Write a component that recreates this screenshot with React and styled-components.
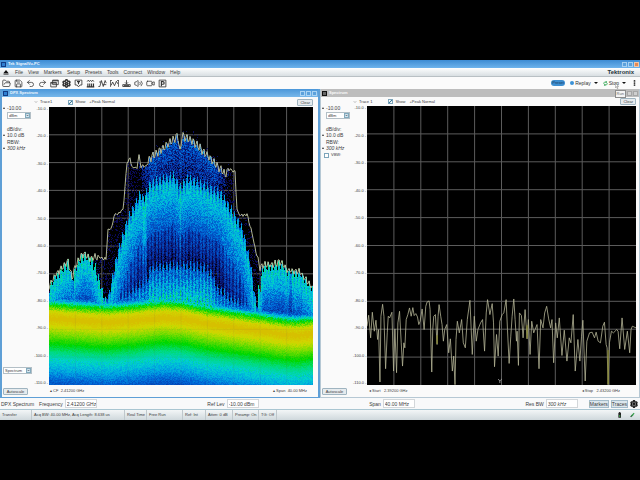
import { useMemo } from "react";
import styled, { createGlobalStyle } from "styled-components";
import {
  FolderOpen,
  Save,
  Undo2,
  Redo2,
  Settings,
  Volume2,
  Video,
  ChevronDown,
  EllipsisVertical,
} from "lucide-react";

const MENU = ["File", "View", "Markers", "Setup", "Presets", "Tools", "Connect", "Window", "Help"];
const LEVELS = ["-10.0", "-20.0", "-30.0", "-40.0", "-50.0", "-60.0", "-70.0", "-80.0", "-90.0", "-100.0", "-110.0"];

//density colour scale, from no hits to many hits
const SCALE = [
  [0, 0, 0, 0],
  [0.1, 10, 10, 85],
  [0.25, 5, 50, 165],
  [0.4, 0, 105, 215],
  [0.5, 0, 165, 225],
  [0.6, 0, 210, 205],
  [0.68, 0, 218, 120],
  [0.76, 0, 215, 0],
  [0.86, 130, 220, 0],
  [0.93, 208, 216, 0],
  [1, 216, 182, 0],
];

//all of the curves below are [x, y] in a 264 x 278 plot
const PEAK = [
  [0, 180], [3, 173], [6, 168], [13, 161], [19, 154], [23, 171], [26, 160], [31, 151],
  [34, 147], [41, 151], [46, 150], [53, 151], [57, 152], [59, 123], [63, 120], [65, 108],
  [69, 107], [74, 103], [78, 56], [81, 51], [83, 61], [88, 60], [90, 48], [92, 59],
  [97, 59], [100, 52], [113, 42], [121, 35], [129, 29], [131, 46], [133, 29], [144, 34],
  [154, 44], [164, 54], [176, 67], [179, 62], [186, 65], [188, 103], [191, 108],
  [198, 107], [203, 126], [207, 146], [211, 160], [216, 158], [223, 158], [231, 155],
  [239, 163], [251, 165], [263, 180],
];
const LOBE = [
  [57, 205], [59, 190], [68, 146], [78, 113], [91, 86], [94, 92], [101, 76], [124, 68], [131, 80],
  [138, 71], [151, 76], [171, 86], [181, 101], [193, 122], [201, 156], [206, 193], [208, 205],
];
const INNER = [
  [57, 200], [80, 184], [98, 172], [101, 160], [131, 157], [155, 160], [163, 166], [167, 180], [178, 188], [207, 205],
];
const FLOOR = [
  [0, 211], [58, 215], [85, 213], [114, 210], [132, 211], [158, 216], [208, 223], [235, 227], [248, 228], [263, 226],
];
const FLOOR_PROFILE = [
  [-60, 0], [-24, 0.2], [-20, 0.42], [-17, 0.6], [-14, 0.74], [-11, 0.82], [-7, 0.93], [0, 0.99],
  [7, 0.94], [15, 0.86], [25, 0.76], [33, 0.68], [43, 0.59], [52, 0.5], [60, 0.4], [70, 0.3],
];
const HAZE = [[88, 0.06], [102, 0.36], [165, 0.36], [180, 0.08]];

//single sweep of the right plot, [x, y] in 810 x 840
const SWEEP = [
  [0, 663], [5, 630], [11, 698], [16, 621], [22, 678], [27, 645], [32, 703], [35, 673], [39, 831],
  [42, 633], [47, 597], [51, 633], [56, 791], [61, 683], [64, 633], [68, 638], [75, 621], [80, 798],
  [84, 671], [89, 803], [93, 653], [98, 618], [103, 713], [107, 783], [111, 713], [114, 728],
  [118, 643], [123, 628], [128, 608], [133, 633], [138, 607], [142, 631], [147, 625], [152, 635],
  [156, 658], [160, 648], [166, 611], [172, 673], [177, 603], [181, 590], [187, 587], [190, 613],
  [195, 801], [198, 673], [201, 633], [206, 628], [211, 718], [214, 633], [217, 598], [222, 633],
  [226, 658], [230, 708], [234, 673], [240, 658], [246, 743], [251, 701], [257, 798], [261, 753],
  [265, 839], [268, 703], [272, 648], [278, 683], [285, 643], [290, 713], [296, 728], [302, 643],
  [310, 585], [317, 748], [323, 633], [329, 708], [334, 673], [342, 653], [348, 643], [354, 738],
  [359, 623], [363, 583], [370, 628], [377, 595], [381, 653], [384, 785], [390, 688], [395, 753],
  [400, 648], [407, 628], [412, 623], [419, 583], [423, 673], [428, 775], [433, 693], [437, 633],
  [442, 581], [446, 643], [450, 708], [452, 678], [456, 781], [459, 623], [465, 631], [470, 698],
  [476, 613], [482, 701], [486, 643], [491, 748], [496, 648], [502, 683], [512, 658], [518, 791],
  [523, 643], [530, 668], [535, 623], [541, 603], [547, 641], [553, 668], [557, 643], [562, 773],
  [568, 653], [573, 698], [579, 638], [587, 751], [594, 675], [602, 768], [609, 698], [614, 713],
  [621, 628], [627, 798], [635, 703], [641, 768], [646, 693], [650, 645], [657, 828], [662, 708],
  [670, 683], [678, 681], [685, 698], [690, 681], [696, 708], [703, 713], [710, 663], [715, 651],
  [720, 718], [723, 728], [726, 839], [730, 713], [736, 678], [742, 683], [752, 673], [756, 678],
  [761, 731], [768, 638], [776, 733], [784, 678], [791, 743], [795, 673], [799, 663], [810, 668],
];

const lerp = (points, x) => {
  if (x <= points[0][0]) return points[0][1];
  for (let i = 1; i < points.length; i++) {
    const [x1, y1] = points[i];
    const [x0, y0] = points[i - 1];
    if (x <= x1) return y0 + ((y1 - y0) * (x - x0)) / (x1 - x0);
  }
  return points[points.length - 1][1];
};

const noise = (x, y) => {
  const n = Math.sin(x * 127.1 + y * 311.7) * 43758.5453;
  return n - Math.floor(n);
};

const colorOf = (value) => {
  const channel = (n) => Math.round(lerp(SCALE.map((s) => [s[0], s[n]]), value));
  return `rgb(${channel(1)}, ${channel(2)}, ${channel(3)})`;
};

const ripple = (x) => Math.cos((x * Math.PI * 2) / 3.4);

const peakAt = (x) => {
  let swing = 1;
  if (x > 98 && x < 178) swing = 4;
  if (x < 50 || x > 208) swing = 3;
  return lerp(PEAK, x) + ripple(x) * swing + (noise(x, 7) - 0.5) * 2;
};

const densityAt = (x, y) => {
  const grain = noise(x, y);
  const comb = ripple(x);
  const d = y - lerp(FLOOR, x);
  const base = lerp(FLOOR_PROFILE, d + (grain - 0.5) * 3);
  let value = d > -24 ? base : 0;
  if (d > 40) value += (grain - 0.5) * 0.12;
  if (d > -14) return value;

  const peak = peakAt(x);
  if (y < peak) return noise(x + 3, y) > 0.94 && peak - y < 8 && x > 98 && x < 180 ? 0.12 : 0;

  if (x < 57 || x > 208) {
    //side lobes, they close in towards the nulls
    const left = x < 57;
    const edge = left ? Math.max(0, x - 42) * 3 : Math.max(0, 214 - x) * 6;
    const depth = y - peak - edge - comb * 3;
    if (depth < 0) return Math.max(value, grain > 0.75 ? 0.12 : 0);
    const split = Math.abs(x - (left ? 23 : 241)) < 2 ? 0.1 : 0;
    const glow = 0.57 - Math.max(0, depth - 14) * 0.008;
    return Math.max(value, glow - split - comb * 0.05 + (grain - 0.5) * 0.16);
  }

  const lobe = y - lerp(LOBE, x) - comb * 5;
  const inner = y - lerp(INNER, x) - comb * 5;
  if (inner > 0) {
    value = Math.max(value, 0.34 + inner * 0.007 - comb * 0.04 + (grain - 0.5) * 0.2);
  }
  if (lobe > 0) {
    const steep = x < 98 || x > 172;
    let glow = lobe < 12 ? 0.42 + lobe * 0.012 : 0.56 - (lobe - 12) * (steep ? 0.0045 : 0.0055);
    if (Math.abs(x - 131) < 1 || Math.abs(x - 95) < 1.5) glow += 0.06;
    if (lobe > 46) glow -= comb > 0.1 ? 0.11 : 0;
    glow = Math.max(glow, 0.1);
    return Math.max(value, glow - comb * 0.03 + (grain - 0.5) * 0.16);
  }
  if (x > 88 && x < 180) {
    return Math.max(value, lerp(HAZE, x) - (y - peak) * 0.005 - comb * 0.04 + (grain - 0.6) * 0.3);
  }
  return Math.max(value, grain > 0.72 ? 0.1 : 0.02);
};

//one path per colour, runs of equal cells are joined
const buildDensity = () => {
  const steps = 50;
  const paths = {};
  for (let x = 0; x < 264; x++) {
    let start = 0;
    let last = 0;
    for (let y = 20; y <= 278; y++) {
      const value = y < 278 ? Math.min(1, Math.max(0, densityAt(x, y))) : -1;
      const step = Math.round(value * steps);
      if (step !== last) {
        if (last > 1) {
          paths[last] = (paths[last] || "") + `M${x} ${start}h1v${y - start}h-1z`;
        }
        start = y;
        last = step;
      }
    }
  }
  return Object.entries(paths).map(([step, d]) => ({ d, fill: colorOf(step / steps) }));
};

const Grid = ({ width, height, opacity = 1 }) => {
  let d = "";
  for (let i = 1; i < 10; i++) {
    d += `M${(width * i) / 10} 0V${height}M0 ${(height * i) / 10}H${width}`;
  }
  return <path d={d} fill="none" stroke="#5c5c5c" vectorEffect="non-scaling-stroke" opacity={opacity} />;
};

const DensityPlot = () => {
  const cells = useMemo(buildDensity, []);
  const line = useMemo(() => {
    let d = "";
    for (let x = 0; x < 264; x++) d += `${x ? "L" : "M"}${x} ${peakAt(x).toFixed(1)}`;
    return d;
  }, []);
  return (
    <PlotSvg viewBox="0 0 264 278" preserveAspectRatio="none" role="img" aria-label="DPX density">
      <rect width="264" height="278" fill="#000" />
      <Grid width={264} height={278} />
      <g shapeRendering="crispEdges">
        {cells.map((cell) => (
          <path key={cell.fill} d={cell.d} fill={cell.fill} />
        ))}
      </g>
      <Grid width={264} height={278} opacity={0.08} />
      <path d={line} fill="none" stroke="#c3c7a4" strokeWidth="0.9" />
    </PlotSvg>
  );
};

const SweepPlot = () => (
  <PlotSvg viewBox="0 0 810 840" preserveAspectRatio="none" role="img" aria-label="Spectrum trace">
    <rect width="810" height="840" fill="#000" />
    <Grid width={810} height={840} />
    <polyline points={SWEEP.join(" ")} fill="none" stroke="#b4b496" strokeWidth="2.4" strokeLinejoin="round" />
    <path d="M726 735V838M211 690V716M482 660V700" stroke="#85851c" strokeWidth="3" />
    <path d="M395 822l5 6 6-6M400 828v6" fill="none" stroke="#ccc" strokeWidth="2" />
  </PlotSvg>
);

const Glyph = ({ children }) => (
  <svg viewBox="0 0 24 24" fill="none" stroke="currentColor" strokeWidth="2.2">
    {children}
  </svg>
);

const TOOLS = [
  ["Open", <FolderOpen />],
  ["Save", <Save />],
  ["Undo", <Undo2 />],
  ["Redo", <Redo2 />],
  ["Displays", <Glyph><path d="M7 3h15v12H7zM2 9h15v12H2z" fill="#fff" /><path d="M7 4.5h15M2 10.5h15" strokeWidth="3" /></Glyph>],
  ["Settings", <Settings strokeWidth={4} />],
  ["Trigger", <Glyph><path d="M3 3h18v13h-5l-4 5-4-5H3z" /><path d="M8 7h8M12 7v7" strokeWidth="3" /></Glyph>],
  ["Acquire", <Glyph><path d="M2 21h20M5 21v-9M10 21v-9M15 21v-9M20 21v-9" strokeWidth="3" /><path d="M3 7l3-4 3 4 3-4 3 4 3-4 3 4" /></Glyph>],
  ["Analysis", <Glyph><path d="M1 20h4L9 4l5 16L19 4l3 7" /><path d="M3 8h6M14 15h8" /></Glyph>],
  ["Trace", <Glyph><path d="M1 3v18M23 3v18M1 4h4M19 4h4" /><path d="M3 17l4-9 5 10 5-12 4 7" /></Glyph>],
  ["Amplitude", <Glyph><path d="M2 15h20v5H2zM12 3v10M8 9l4 4 4-4" /><path d="M5 18h14" strokeWidth="3" /></Glyph>],
  ["Audio", <Volume2 />],
  ["Record", <Video />],
  ["Presets", <Glyph><path d="M3 3h18v18H3z" /><path d="M9 19V7h4a3 3 0 010 7H9" strokeWidth="3" /></Glyph>],
];

const Drop = ({ label, value, width }) => (
  <SelectBox $width={width}>
    <select aria-label={label} defaultValue={value}>
      <option>{value}</option>
    </select>
    <ChevronDown />
  </SelectBox>
);

const Reading = ({ label, children, italic }) => (
  <StyledReading $italic={italic}>
    {label && <span>{label}</span>}
    <em>{children}</em>
  </StyledReading>
);

const Panel = ({ title, trace, active, start, stop, view, vbw, children }) => (
  <StyledPanel $active={active}>
    <PanelTitle $active={active}>
      <PanelIcon $active={active} />
      <h2>{title}</h2>
      <WindowButtons>
        <button aria-label={`Minimize ${title}`} />
        <button aria-label={`Maximize ${title}`} />
        {active && <button aria-label={`Close ${title}`} />}
      </WindowButtons>
    </PanelTitle>
    <PanelBody>
      <Side>
        <Reading>-10.00</Reading>
        <Drop label={`${title} units`} value="dBm" width={24} />
        <Reading label="dB/div:">10.0 dB</Reading>
        <Reading label="RBW:" italic>300 kHz</Reading>
        {vbw && (
          <Check>
            <input type="checkbox" />
            VBW:
          </Check>
        )}
        <SideFoot>
          {view && <Drop label="View" value="Spectrum" width={29} />}
          <SmallButton>Autoscale</SmallButton>
        </SideFoot>
      </Side>
      <ChartArea $active={active}>
        <TraceBar $active={active}>
          <TraceName>
            <ChevronDown />
            {trace}
          </TraceName>
          <Check>
            <input type="checkbox" defaultChecked />
            Show
          </Check>
          <span>+Peak Normal</span>
          <SmallButton>Clear</SmallButton>
        </TraceBar>
        <ChartRow>
          <Ticks $active={active}>
            {LEVELS.map((level) => (
              <li key={level}>{level}</li>
            ))}
          </Ticks>
          {children}
        </ChartRow>
        <ChartFoot $active={active}>
          <span>{start}</span>
          <span>{stop}</span>
        </ChartFoot>
      </ChartArea>
    </PanelBody>
  </StyledPanel>
);

const Field = ({ label, value, italic }) => (
  <StyledField $italic={italic}>
    {label}
    <input defaultValue={value} />
  </StyledField>
);

const App = () => {
  return (
    <>
      <GlobalStyle />
      <Stage>
        <Window>
          <TitleBar>
            <PanelIcon $active />
            <h1>Tek SignalVu-PC</h1>
            <WindowButtons>
              <button aria-label="Minimize" />
              <button aria-label="Restore" />
              <CloseButton aria-label="Close" />
            </WindowButtons>
          </TitleBar>
          <MenuBar>
            <svg viewBox="0 0 12 10">
              <path d="M6 0l5 6H1zM1 7h10v2H1z" fill="#111" />
            </svg>
            {MENU.map((item) => (
              <button key={item}>{item}</button>
            ))}
            <Brand>Tektronix</Brand>
          </MenuBar>
          <ToolBar>
            <Tools>
              {TOOLS.map(([name, icon]) => (
                <button key={name} aria-label={name}>
                  {icon}
                </button>
              ))}
            </Tools>
            <RunControls>
              <PresetButton>Preset</PresetButton>
              <RunButton>
                <Dot />
                Replay
                <Caret />
              </RunButton>
              <RunButton>
                <svg viewBox="0 0 24 24" fill="none" stroke="#31a653" strokeWidth="4">
                  <path d="M4 14a8 8 0 0113-8M20 10a8 8 0 01-13 8M17 1v6h-6M7 23v-6h6" />
                </svg>
                Stop
                <Caret />
                <Pointer viewBox="0 0 12 18">
                  <path d="M1 1v13l3-3 3 6 2-1-3-6h5z" fill="#fff" stroke="#333" />
                </Pointer>
                <Tip role="tooltip">Run</Tip>
              </RunButton>
              <IconButton aria-label="More">
                <EllipsisVertical strokeWidth={4} />
              </IconButton>
            </RunControls>
          </ToolBar>
          <Panels>
            <Panel
              active
              view
              title="DPX Spectrum"
              trace="Trace1"
              start="▴ CF  2.41200 GHz"
              stop="▴ Span  40.00 MHz"
            >
              <DensityPlot />
            </Panel>
            <Panel vbw title="Spectrum" trace="Trace 1" start="◂ Start   2.39200 GHz" stop="◂ Stop   2.43200 GHz">
              <SweepPlot />
            </Panel>
          </Panels>
          <ControlBar>
            <Group $gap={5}>
              <span>DPX Spectrum</span>
              <Field label="Frequency" value="2.41200 GHz" />
            </Group>
            <Field label="Ref Lev" value="-10.00 dBm" />
            <Field label="Span" value="40.00 MHz" />
            <Group $gap={11}>
              <Field label="Res BW" value="300 kHz" italic />
              <Group $gap={2}>
                <BarButton>Markers</BarButton>
                <BarButton>Traces</BarButton>
                <IconButton aria-label="Settings">
                  <Settings strokeWidth={4} />
                </IconButton>
              </Group>
            </Group>
          </ControlBar>
          <StatusBar>
            <StatusCell $width={32}>Transfer</StatusCell>
            <StatusCell $width={93}>Acq BW: 40.00 MHz, Acq Length: 8.638 us</StatusCell>
            <StatusCell $width={22}>Real Time</StatusCell>
            <StatusCell $width={36}>Free Run</StatusCell>
            <StatusCell $width={23}>Ref: Int</StatusCell>
            <StatusCell $width={27}>Atten: 0 dB</StatusCell>
            <StatusCell $width={26}>Preamp: On</StatusCell>
            <StatusCell $width={18}>TG: Off</StatusCell>
            <StatusIcons>
              <svg viewBox="0 0 12 16">
                <path d="M3 2h2V0h3v2h2v13H3z" fill="#222" />
                <path d="M5 8h3v5H5z" fill="#3a9a4a" />
              </svg>
              <svg viewBox="0 0 16 16" fill="none" strokeWidth="4">
                <path d="M2 14l7-7" stroke="#245c34" />
                <path d="M6 11l7-9" stroke="#39a04e" />
              </svg>
            </StatusIcons>
          </StatusBar>
        </Window>
      </Stage>
    </>
  );
};

const GlobalStyle = createGlobalStyle`
  * {
    box-sizing: border-box;
    margin: 0;
    padding: 0;
  }
  body {
    background: #000;
    color: #3c3c3c;
    font-family: "Liberation Sans", Arial, sans-serif;
    font-size: 4px;
    line-height: 6px;
  }
  button, input, select {
    border: none;
    background: none;
    font: inherit;
    color: inherit;
    white-space: nowrap;
  }
  h1, h2 {
    font-size: 4px;
    line-height: 8px;
    font-weight: bold;
  }
  svg {
    display: block;
    flex-shrink: 0;
  }
`;

const Stage = styled.div`
  min-height: 100vh;
  display: flex;
  align-items: center;
`;

const Window = styled.main`
  width: 100%;
  aspect-ratio: 16 / 9;
  display: flex;
  flex-direction: column;
  background: #fafafa;
`;

const TitleBar = styled.header`
  height: 8px;
  flex-shrink: 0;
  display: flex;
  align-items: center;
  gap: 2px;
  padding: 0 1px;
  background: linear-gradient(#3c8bd3, #6db3ec);
  color: #f0f8ff;
`;

const WindowButtons = styled.div`
  margin-left: auto;
  display: flex;
  gap: 1px;
  button {
    width: 5px;
    height: 5px;
    border: 1px solid #a5d0f1;
    background: #5ba1dc;
  }
`;

const CloseButton = styled.button`
  && {
    background: #e58a55;
    border-color: #f3c7a8;
  }
`;

const MenuBar = styled.nav`
  height: 9px;
  flex-shrink: 0;
  display: flex;
  align-items: center;
  gap: 5px;
  padding: 0 6px 0 3px;
  background: linear-gradient(#fdfefe, #d9dfe2);
  border-bottom: 1px solid #b9c0c4;
  font-size: 5px;
  svg {
    width: 6px;
    height: 5px;
    margin-right: 1px;
  }
`;

const Brand = styled.strong`
  margin-left: auto;
  font-size: 6px;
  color: #26343c;
`;

const ToolBar = styled.div`
  height: 12px;
  flex-shrink: 0;
  display: flex;
  align-items: center;
  justify-content: space-between;
  padding: 0 2px;
  background: #fbfbfb;
  color: #333;
`;

const Tools = styled.div`
  display: flex;
  gap: 3px;
  svg {
    width: 9px;
    height: 9px;
  }
`;

const RunControls = styled.div`
  display: flex;
  align-items: center;
  gap: 5px;
  font-size: 5px;
`;

const PresetButton = styled.button`
  width: 14px;
  height: 6px;
  border-radius: 3px;
  background: #3d8ed0;
  color: #17375a;
  font-size: 4px;
  line-height: 6px;
`;

const RunButton = styled.button`
  position: relative;
  display: flex;
  align-items: center;
  gap: 1px;
  svg {
    width: 5px;
    height: 5px;
  }
`;

const Dot = styled.i`
  width: 4px;
  height: 4px;
  border-radius: 50%;
  background: #3c92d6;
`;

const Caret = styled.i`
  margin-left: 2px;
  border: 2px solid transparent;
  border-top-color: #111;
  border-bottom: none;
`;

const Pointer = styled.svg`
  && {
    position: absolute;
    left: 12px;
    top: 3px;
    width: 4px;
    height: 6px;
    z-index: 2;
  }
`;

const Tip = styled.span`
  position: absolute;
  left: 12px;
  top: 10px;
  z-index: 2;
  width: 11px;
  height: 8px;
  border: 1px solid #8c8c8c;
  background: #f4f4f4;
  color: #666;
  font-size: 4px;
  line-height: 6px;
  text-align: center;
`;

const IconButton = styled.button`
  svg {
    width: 8px;
    height: 8px;
    color: #111;
  }
  ${RunControls} & svg {
    width: 7px;
  }
`;

const Panels = styled.div`
  flex: 1;
  min-height: 0;
  display: grid;
  grid-template-columns: 1fr 1fr;
`;

const StyledPanel = styled.section`
  display: flex;
  flex-direction: column;
  min-width: 0;
  border: solid ${({ $active }) => ($active ? "#5e9fd6" : "#b6c8d4")};
  border-width: ${({ $active }) => ($active ? "0 2px 1px" : "0 1px 1px")};
  background: #fafafa;
`;

const PanelTitle = styled.div`
  height: 8px;
  flex-shrink: 0;
  display: flex;
  align-items: center;
  gap: 2px;
  padding: 0 1px;
  background: ${({ $active }) => ($active ? "linear-gradient(#4b97d9, #77b7ea)" : "#bdbdbd")};
  color: ${({ $active }) => ($active ? "#f0f8ff" : "#fafafa")};
  ${WindowButtons} button {
    border-color: ${({ $active }) => ($active ? "#a9d3f3" : "#a6a6a6")};
    background: ${({ $active }) => ($active ? "#5ba1dc" : "#cfcfcf")};
  }
`;

const PanelIcon = styled.i`
  width: 5px;
  height: 5px;
  border: 1px solid ${({ $active }) => ($active ? "#123c84" : "#111")};
  background: ${({ $active }) => ($active ? "#2f7fd0" : "#666")};
`;

const PanelBody = styled.div`
  flex: 1;
  min-height: 0;
  display: flex;
`;

const Side = styled.div`
  width: 32px;
  flex-shrink: 0;
  display: flex;
  flex-direction: column;
  align-items: flex-start;
  padding: 8px 0 2px 1px;
  > label {
    margin-left: 2px;
  }
`;

const StyledReading = styled.div`
  display: flex;
  flex-direction: column;
  margin-bottom: 1px;
  padding-left: 4px;
  position: relative;
  font-size: 5px;
  em {
    font-style: ${({ $italic }) => ($italic ? "italic" : "normal")};
  }
  &::before {
    content: "";
    position: absolute;
    left: 0;
    bottom: 2px;
    border: 1px solid transparent;
    border-bottom: 2px solid #333;
    border-top: none;
  }
`;

const SelectBox = styled.span`
  display: flex;
  align-items: center;
  width: ${({ $width }) => $width}px;
  height: 7px;
  border: 1px solid #b3bfc6;
  background: #fff;
  ${Side} > & {
    margin: 0 0 7px 4px;
  }
  select {
    flex: 1;
    min-width: 0;
    padding-left: 1px;
    appearance: none;
    line-height: 5px;
  }
  svg {
    width: 5px;
    height: 5px;
    background: #d3e6f1;
    border: 1px solid #83aabd;
    stroke-width: 5;
  }
`;

const Check = styled.label`
  display: flex;
  align-items: center;
  gap: 2px;
  input {
    appearance: none;
    width: 5px;
    height: 5px;
    border: 1px solid #7da5bb;
    background: #fff;
  }
  input:checked {
    background: linear-gradient(135deg, #fff 30%, #3b7896 50%, #fff 70%);
  }
`;

const SideFoot = styled.div`
  margin-top: auto;
  display: flex;
  flex-direction: column;
  gap: 14px;
`;

const SmallButton = styled.button`
  height: 7px;
  padding: 0 2px;
  border: 1px solid #9fb4c0;
  border-radius: 1px;
  background: #e6ebee;
  line-height: 5px;
  ${SideFoot} & {
    width: 25px;
  }
`;

const ChartArea = styled.div`
  flex: 1;
  min-width: 0;
  display: flex;
  flex-direction: column;
  padding-right: ${({ $active }) => ($active ? 5 : 3)}px;
`;

const TraceBar = styled.div`
  height: ${({ $active }) => ($active ? 10 : 9)}px;
  flex-shrink: 0;
  display: flex;
  align-items: center;
  gap: 4px;
  ${Check} {
    margin-left: 12px;
  }
  ${SmallButton} {
    margin-left: auto;
  }
`;

const TraceName = styled.span`
  display: flex;
  align-items: center;
  gap: 2px;
  svg {
    width: 4px;
    height: 4px;
  }
`;

const ChartRow = styled.div`
  flex: 1;
  min-height: 0;
  display: flex;
`;

const Ticks = styled.ul`
  width: ${({ $active }) => ($active ? 15 : 14)}px;
  flex-shrink: 0;
  display: flex;
  flex-direction: column;
  justify-content: space-between;
  list-style: none;
  line-height: 4px;
  text-align: right;
  padding-right: 1px;
  li::after {
    content: "-";
    margin-left: 1px;
  }
`;

const PlotSvg = styled.svg`
  flex: 1;
  min-width: 0;
  width: 100%;
  height: 100%;
`;

const ChartFoot = styled.div`
  height: 12px;
  flex-shrink: 0;
  display: flex;
  align-items: center;
  justify-content: space-between;
  padding: 0 ${({ $active }) => ($active ? 6 : 16)}px 0 16px;
  white-space: pre;
`;

const ControlBar = styled.div`
  height: 12px;
  flex-shrink: 0;
  display: flex;
  align-items: center;
  justify-content: space-between;
  padding: 0 2px 0 1px;
  background: #f8f9fa;
  border-bottom: 1px solid #a9c6d2;
  font-size: 5px;
  white-space: nowrap;
`;

const Group = styled.div`
  display: flex;
  align-items: center;
  gap: ${({ $gap }) => $gap}px;
`;

const StyledField = styled.label`
  display: flex;
  align-items: center;
  gap: 2px;
  input {
    width: 32px;
    height: 9px;
    padding-left: 1px;
    border: 1px solid #d3d7da;
    background: #fff;
    font-style: ${({ $italic }) => ($italic ? "italic" : "normal")};
  }
`;

const BarButton = styled.button`
  height: 8px;
  border: 1px solid #a3bccb;
  background: #dbe6ec;
  line-height: 6px;
`;

const StatusBar = styled.footer`
  height: 10px;
  flex-shrink: 0;
  display: flex;
  background: linear-gradient(#f3f6f7, #cfd8dc);
  white-space: nowrap;
`;

const StatusCell = styled.span`
  width: ${({ $width }) => $width}px;
  padding-left: 2px;
  border-right: 1px solid #bfc8cc;
  line-height: 9px;
`;

const StatusIcons = styled.div`
  margin-left: auto;
  display: flex;
  align-items: center;
  gap: 8px;
  padding-right: 5px;
  svg {
    width: 5px;
    height: 6px;
  }
`;

export default App;
